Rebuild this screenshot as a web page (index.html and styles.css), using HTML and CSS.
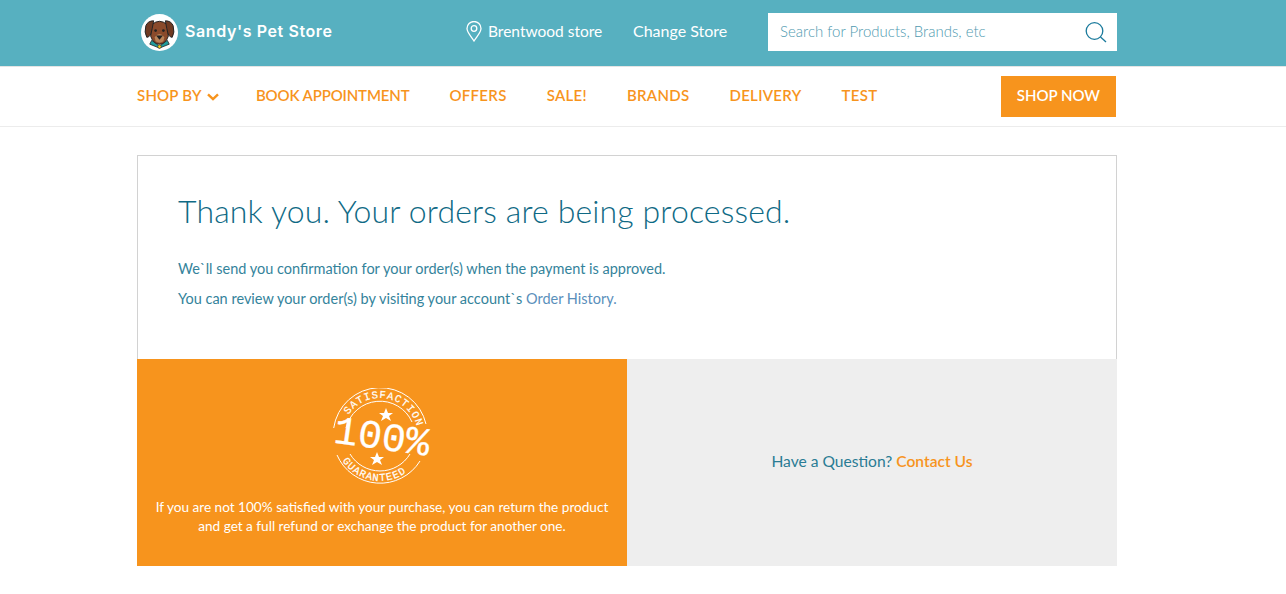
FILE: index.html
```html
<!DOCTYPE html>
<html>

<head>
    <meta charset="utf-8" />
    <title>Sandy's Pet Store</title>
    <link rel="stylesheet" href="styles.css">
</head>

<body>
    <header class="topbar">
        <div class="wrap topbar-row">
            <a class="logo" href="#">
                <svg class="logo-img" width="37" height="37" viewBox="0 0 38 38">
                    <circle cx="19" cy="19" r="19" fill="#fff" />
                    <path d="M11 27 L19 33 L27 27 L29 31 L19 35 L9 31 Z" fill="#1f9c9c" stroke="#222" stroke-width="0.8" />
                    <path d="M11 11 Q19 4 27 11 L28 23 Q25 31 19 31 Q13 31 10 23 Z" fill="#8a4a2b" stroke="#222" stroke-width="1" />
                    <path d="M13 7 Q7 7 5 12 Q3 19 6 24 Q10 24 11.5 15 Z" fill="#6f3a22" stroke="#222" stroke-width="1" />
                    <path d="M25 7 Q31 7 33 12 Q35 19 32 24 Q28 24 26.5 15 Z" fill="#6f3a22" stroke="#222" stroke-width="1" />
                    <path d="M14 24 Q19 17 24 24 L23 28 Q19 31 15 28 Z" fill="#b98358" />
                    <circle cx="15" cy="17" r="1.4" fill="#222" />
                    <circle cx="23" cy="17" r="1.4" fill="#222" />
                    <path d="M15.5 22 L22.5 22 L19 26.5 Z" fill="#222" />
                    <circle cx="19" cy="33.5" r="1.8" fill="#f2d21c" stroke="#222" stroke-width="0.6" />
                </svg>
                <span class="logo-text">Sandy's Pet Store</span>
            </a>
            <div class="store">
                <svg class="pin" width="16" height="21" viewBox="0 0 16 21" fill="none" stroke="#fff" stroke-width="1.3">
                    <path d="M8 20 C5 15 1 11.5 1 7.5 A7 7 0 0 1 15 7.5 C15 11.5 11 15 8 20 Z" />
                    <circle cx="8" cy="7.5" r="2.8" />
                </svg>
                <span>Brentwood store</span>
            </div>
            <a class="change" href="#">Change Store</a>
            <div class="search">
                <span class="search-text">Search for Products, Brands, etc</span>
                <svg width="22" height="21" viewBox="0 0 22 21" fill="none" stroke="#1a7a9c" stroke-width="1.3">
                    <circle cx="9.5" cy="9" r="8.3" />
                    <path d="M15.5 15 L21 20" />
                </svg>
            </div>
        </div>
    </header>

    <nav class="navbar">
        <div class="wrap nav-row">
            <a class="nav-link nav-shop" href="#">SHOP BY
                <svg class="chev" width="12" height="8" viewBox="0 0 12 8" fill="none" stroke="#f7941d" stroke-width="2.4">
                    <path d="M1 1.3 L6 6 L11 1.3" />
                </svg>
            </a>
            <a class="nav-link nav-book" href="#">BOOK APPOINTMENT</a>
            <a class="nav-link" href="#">OFFERS</a>
            <a class="nav-link" href="#">SALE!</a>
            <a class="nav-link" href="#">BRANDS</a>
            <a class="nav-link" href="#">DELIVERY</a>
            <a class="nav-link" href="#">TEST</a>
            <a class="shop-now" href="#">SHOP NOW</a>
        </div>
    </nav>

    <main class="wrap">
        <section class="card">
            <div class="card-top">
                <h1>Thank you. Your orders are being processed.</h1>
                <p>We`ll send you confirmation for your order(s) when the payment is approved.</p>
                <p>You can review your order(s) by visiting your account`s <a class="history" href="#">Order History.</a></p>
            </div>
            <div class="card-bottom">
                <div class="guarantee">
                    <svg class="stamp" width="100" height="100" viewBox="0 0 100 100" fill="none" stroke="#fff">
                        <defs>
                            <path id="arcTop" d="M10 48 A38 38 0 0 1 86 48" />
                            <path id="arcBottom" d="M3 48 A45 45 0 0 0 93 48" />
                        </defs>
                        <path d="M1.7 40 A47 47 0 0 1 94 36" stroke-width="1" />
                        <path d="M5 67 A47 47 0 0 0 88 73" stroke-width="1" />
                        <path d="M14 40 A35 35 0 0 1 80 34" stroke-width="1" />
                        <path d="M18 66 A35 35 0 0 0 78 66" stroke-width="1" />
                        <g transform="rotate(10 48 48)">
                            <text class="stamp-arc"><textPath href="#arcTop" startOffset="50%" text-anchor="middle">SATISFACTION</textPath></text>
                            <text class="stamp-arc"><textPath href="#arcBottom" startOffset="50%" text-anchor="middle">GUARANTEED</textPath></text>
                        </g>
                        <text class="stamp-big" x="50" y="61" text-anchor="middle" transform="rotate(8 48 48)">100%</text>
                        <polygon points="54,20 56,25 61,25 57,28 59,33 54,30 49,33 51,28 47,25 52,25" fill="#fff" stroke="none" />
                        <polygon points="45,64 47,69 52,69 48,72 50,77 45,74 40,77 42,72 38,69 43,69" fill="#fff" stroke="none" />
                    </svg>
                    <p>If you are not 100% satisfied with your purchase, you can return the product and get a full refund or exchange the product for another one.</p>
                </div>
                <div class="question">
                    <span>Have a Question? <a class="contact" href="#">Contact Us</a></span>
                </div>
            </div>
        </section>
    </main>
</body>

</html>
```

FILE: styles.css
```css
body {
    margin: 0;
    background-color: #fff;
    font-family: 'Lato', sans-serif;
    color: #34839b;
}

a {
    text-decoration: none;
}

.wrap {
    width: 980px;
    margin-left: 137px;
}

.topbar {
    height: 66px;
    background-color: #57b0c0;
    border-bottom: 1px solid #e4e4e4;
}

.topbar-row {
    display: flex;
    align-items: center;
    height: 64px;
    color: #fff;
}

.logo {
    display: flex;
    align-items: center;
    margin-left: 4px;
    color: #fff;
}

.logo-img {
    margin-right: 7px;
}

.logo-text {
    width: 281px;
    margin-bottom: 2px;
    font-family: 'Inter', sans-serif;
    font-size: 16px;
    font-weight: 600;
    letter-spacing: 0.6px;
}

.store {
    display: flex;
    align-items: center;
    width: 167px;
    margin-bottom: 2px;
    font-size: 15.5px;
}

.pin {
    margin-right: 6px;
}

.change {
    width: 135px;
    margin-bottom: 4px;
    color: #fff;
    font-size: 16px;
}

.search {
    display: flex;
    align-items: center;
    justify-content: space-between;
    width: 349px;
    height: 38px;
    padding: 0 10px 0 12px;
    box-sizing: border-box;
    background-color: #fff;
}

.search-text {
    margin-bottom: 2px;
    color: #4f9ab0;
    font-size: 15px;
    font-weight: 300;
}

.navbar {
    height: 59px;
    border-bottom: 1px solid #ececec;
}

.nav-row {
    display: flex;
    align-items: center;
    gap: 40px;
    height: 59px;
    width: 979px;
}

.nav-link {
    margin-bottom: 3px;
    color: #f7941d;
    font-size: 15px;
    font-weight: 600;
    letter-spacing: 0.3px;
}

.nav-shop {
    margin-right: -3px;
    letter-spacing: 0.2px;
}

.nav-book {
    letter-spacing: -0.15px;
}

.chev {
    margin-left: 2px;
}

.shop-now {
    margin-left: auto;
    padding: 10px 16px 13px;
    background-color: #f7941d;
    color: #fff;
    font-size: 15px;
    font-weight: 600;
}

.card {
    margin-top: 28px;
}

.card-top {
    height: 204px;
    padding: 38px 40px 0;
    box-sizing: border-box;
    border: 1px solid #d2d2d2;
    border-bottom: 0;
}

h1 {
    margin: 0 0 31px;
    color: #0f6a85;
    font-size: 32px;
    font-weight: 300;
    line-height: 34px;
    letter-spacing: 0.14px;
}

.card-top p {
    margin: 0 0 10px;
    font-size: 14.5px;
    line-height: 20px;
}

.history {
    color: #5a8fbb;
}

.card-bottom {
    display: grid;
    grid-template-columns: 490px 490px;
    height: 207px;
}

.guarantee {
    padding-top: 29px;
    background-color: #f7941d;
    color: #fff;
    text-align: center;
}

.stamp {
    display: block;
    margin: 0 auto;
}

.guarantee p {
    margin: 10px 0 0;
    padding: 0 12px;
    font-size: 13.6px;
    line-height: 19px;
}

.stamp-arc {
    fill: #fff;
    stroke: #fff;
    stroke-width: 0.2;
    font-family: 'Liberation Mono', monospace;
    font-size: 10.5px;
    letter-spacing: 1px;
}

.stamp-big {
    fill: #fff;
    stroke: #fff;
    stroke-width: 0.3;
    font-family: 'Liberation Mono', monospace;
    font-size: 40px;
}

.question {
    display: flex;
    align-items: center;
    justify-content: center;
    padding-bottom: 4px;
    background-color: #eeeeee;
    color: #2a7c94;
    font-size: 15.6px;
}

.contact {
    color: #f7941d;
    font-weight: 600;
}
```
